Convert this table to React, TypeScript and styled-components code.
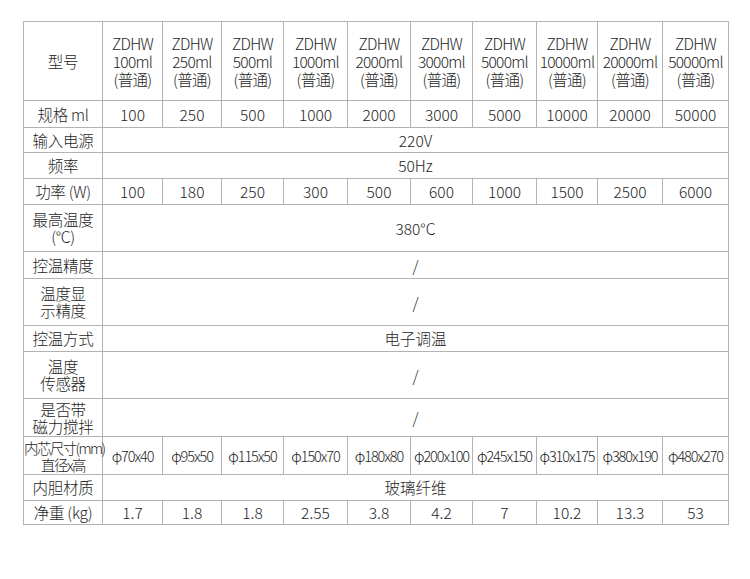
import React from 'react';
import styled, { createGlobalStyle } from 'styled-components';

const GlobalStyle = createGlobalStyle`
  html, body {
    margin: 0;
    padding: 0;
    background: #ffffff;
  }
  body {
    font-family: "Noto Sans CJK SC", "Noto Sans", sans-serif;
    color: #1e1e1e;
  }
`;

const Page = styled.div`
  width: 750px;
  height: 579px;
  padding: 21px 0 0 23px;
  box-sizing: border-box;
`;

const Table = styled.table`
  border-collapse: collapse;
  table-layout: fixed;
  width: 705px;
  font-size: 15.5px;
  font-weight: 300;
  line-height: 17px;
`;

const Row = styled.tr<{ $h: number }>`
  height: ${p => p.$h}px;
`;

const Cell = styled.td<{ $tight?: boolean }>`
  border: 1px solid #b3b3b3;
  padding: 0;
  text-align: center;
  vertical-align: middle;
  white-space: nowrap;
  overflow: visible;
  font-size: ${p => (p.$tight ? '14.5px' : 'inherit')};
  letter-spacing: ${p => (p.$tight ? '-1.1px' : '0')};
`;

const Label = styled(Cell)`
  letter-spacing: ${p => (p.$tight ? '-1.6px' : '-0.3px')};
`;

const ModelName = styled.div`
  line-height: 18px;
  letter-spacing: -0.7px;
`;

const colWidths = [79, 60, 59, 62, 64, 63, 62, 64, 61, 65, 66];

const models = ['100', '250', '500', '1000', '2000', '3000', '5000', '10000', '20000', '50000'];

type Spec =
  | { label: React.ReactNode; h: number; values: string[]; tight?: boolean }
  | { label: React.ReactNode; h: number; span: string };

const specs: Spec[] = [
  { label: '规格 ml', h: 27, values: models },
  { label: '输入电源', h: 25, span: '220V' },
  { label: '频率', h: 26, span: '50Hz' },
  { label: '功率 (W)', h: 26, values: ['100', '180', '250', '300', '500', '600', '1000', '1500', '2500', '6000'] },
  { label: <>最高温度<br />(°C)</>, h: 47, span: '380°C' },
  { label: '控温精度', h: 27, span: '/' },
  { label: <>温度显<br />示精度</>, h: 47, span: '/' },
  { label: '控温方式', h: 26, span: '电子调温' },
  { label: <>温度<br />传感器</>, h: 47, span: '/' },
  { label: <>是否带<br />磁力搅拌</>, h: 38, span: '/' },
  {
    label: <>内芯尺寸(mm)<br />直径x高</>,
    h: 38,
    tight: true,
    values: ['φ70x40', 'φ95x50', 'φ115x50', 'φ150x70', 'φ180x80', 'φ200x100', 'φ245x150', 'φ310x175', 'φ380x190', 'φ480x270'],
  },
  { label: '内胆材质', h: 26, span: '玻璃纤维' },
  { label: '净重 (kg)', h: 24, values: ['1.7', '1.8', '1.8', '2.55', '3.8', '4.2', '7', '10.2', '13.3', '53'] },
];

const App: React.FC = () => (
  <Page>
    <GlobalStyle />
    <Table>
      <colgroup>
        {colWidths.map((w, i) => (
          <col key={i} style={{ width: w }} />
        ))}
      </colgroup>
      <tbody>
        <Row $h={79}>
          <Label>型号</Label>
          {models.map(m => (
            <Cell key={m}>
              <ModelName>ZDHW</ModelName>
              <ModelName>{m}ml</ModelName>
              <ModelName>(普通)</ModelName>
            </Cell>
          ))}
        </Row>
        {specs.map((s, i) => (
          <Row key={i} $h={s.h}>
            <Label $tight={'tight' in s && s.tight}>{s.label}</Label>
            {'span' in s ? (
              <Cell colSpan={10}>{s.span}</Cell>
            ) : (
              s.values.map((v, j) => (
                <Cell key={j} $tight={s.tight}>
                  {v}
                </Cell>
              ))
            )}
          </Row>
        ))}
      </tbody>
    </Table>
  </Page>
);

export default App;
